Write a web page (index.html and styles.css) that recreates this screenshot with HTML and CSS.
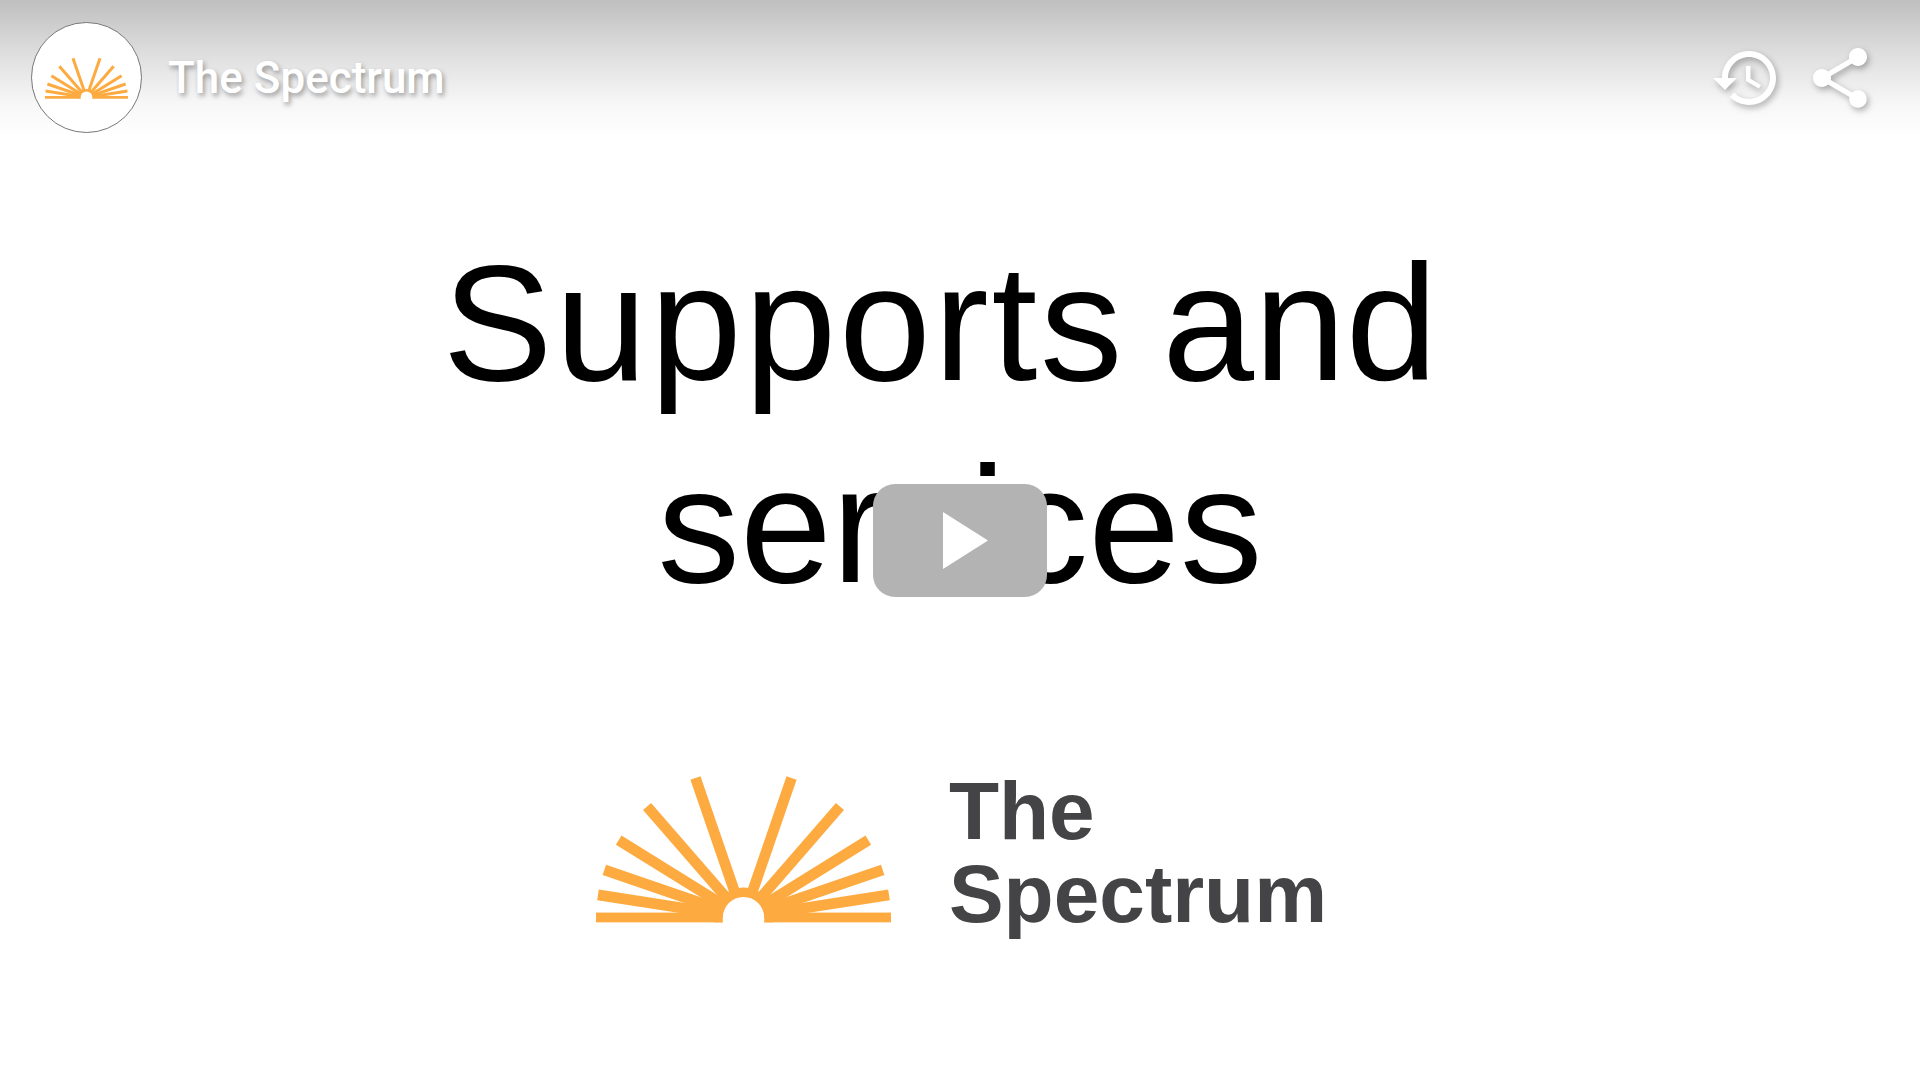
FILE: index.html
```html
<!DOCTYPE html>
<html lang="en">
<head>
  <meta charset="UTF-8">
  <meta name="viewport" content="width=device-width, initial-scale=1.0">
  <title>Supports and services - The Spectrum</title>
  <link rel="stylesheet" href="styles.css">
</head>
<body>
<div class="player">
  <div class="slide">
    <h1 class="slide-title">
      <span class="title-line"><span class="title-word">Supports</span> and</span><br>services
    </h1>
    <div class="brand">
      <svg class="brand-mark" viewBox="50 40 884 446" aria-hidden="true">
        <g id="mark">
          <g stroke="#fdab41" stroke-width="32" fill="none">
            <path d="M348 52L492 470M636 52L492 470"/>
            <path d="M203 137L492 470M781 137L492 470"/>
            <path d="M118 238L492 470M866 238L492 470"/>
            <path d="M75 327L492 470M909 327L492 470"/>
            <path d="M56 402L492 470M928 402L492 470"/>
          </g>
          <circle cx="492" cy="470" r="90" fill="#fdab41"/>
          <rect x="50" y="455" width="884" height="30" fill="#fdab41"/>
          <path d="M430 490V470A62 62 0 0 1 554 470V490Z" fill="#fff"/>
          <rect x="50" y="485" width="884" height="40" fill="#fff"/>
        </g>
      </svg>
      <div class="brand-name">The<br>Spectrum</div>
    </div>
  </div>

  <div class="topbar">
    <div class="channel-icon">
      <svg class="channel-mark" viewBox="50 40 884 446" aria-hidden="true">
        <use href="#mark"/>
      </svg>
    </div>
    <div class="channel-name">The Spectrum</div>
    <div class="topbar-actions">
      <svg class="action-icon" viewBox="0 0 24 24" aria-hidden="true">
        <path d="M13 3c-4.97 0-9 4.03-9 9H1l3.89 3.89.07.14L9 12H6c0-3.87 3.13-7 7-7s7 3.13 7 7-3.13 7-7 7c-1.93 0-3.68-.79-4.94-2.06l-1.42 1.42C8.27 19.99 10.51 21 13 21c4.97 0 9-4.03 9-9s-4.03-9-9-9zm-1 5v5l4.28 2.54.72-1.21-3.5-2.08V8H12z"/>
      </svg>
      <svg class="action-icon" viewBox="0 0 24 24" aria-hidden="true">
        <path d="M18 16.08c-.76 0-1.44.3-1.96.77L8.91 12.7c.05-.23.09-.46.09-.7s-.04-.47-.09-.7l7.05-4.11c.54.5 1.25.81 2.04.81 1.66 0 3-1.34 3-3s-1.34-3-3-3-3 1.34-3 3c0 .24.04.47.09.7L8.04 9.81C7.5 9.31 6.79 9 6 9c-1.66 0-3 1.34-3 3s1.34 3 3 3c.79 0 1.5-.31 2.04-.81l7.12 4.16c-.05.21-.08.43-.08.65 0 1.61 1.31 2.92 2.92 2.92 1.61 0 2.92-1.31 2.92-2.92s-1.31-2.92-2.92-2.92z"/>
      </svg>
    </div>
  </div>

  <div class="play-button">
    <svg class="play-icon" viewBox="0 0 45 57" aria-hidden="true">
      <path d="M0 0L45 28.5L0 57Z"/>
    </svg>
  </div>
</div>
</body>
</html>
```

FILE: styles.css
```css
body {
  margin: 0;
  padding: 0;
  background-color: #fff;
  font-family: 'Liberation Sans', Arial, sans-serif;
}

.player {
  position: relative;
  width: 1920px;
  height: 1080px;
  overflow: hidden;
  background-color: #fff;
}

.slide {
  display: flex;
  flex-direction: column;
  align-items: center;
  padding-top: 222px;
}

.slide-title {
  margin: 0;
  font-size: 165px;
  font-weight: 400;
  line-height: 202px;
  text-align: center;
  color: #000;
}

/* first line sits a little left of centre in the slide */
.title-line {
  display: inline-block;
  padding-right: 40px;
  word-spacing: -9px;
}

.title-word {
  letter-spacing: 2.8px;
}

.brand {
  display: flex;
  align-items: flex-start;
  gap: 58px;
  margin-top: 143px;
  margin-left: 3px;
}

.brand-mark {
  display: block;
  width: 295px;
  height: 149px;
  margin-top: 5px;
}

.brand-name {
  font-size: 82px;
  font-weight: 700;
  line-height: 83px;
  color: #444446;
}

/* title bar lies over the slide */
.topbar {
  position: absolute;
  top: 0;
  left: 0;
  right: 0;
  height: 135px;
  display: flex;
  align-items: center;
  padding: 23px 44px 3px 31px;
  box-sizing: border-box;
  background: linear-gradient(to bottom, #bfbfbf, #dcdcdc 37%, #f6f6f6 75%, #fff);
}

.channel-icon {
  display: flex;
  align-items: center;
  justify-content: center;
  width: 111px;
  height: 111px;
  box-sizing: border-box;
  border: 1px solid #777;
  border-radius: 50%;
  background-color: #fff;
}

.channel-mark {
  display: block;
  width: 83px;
  height: 42px;
}

.channel-name {
  margin-left: 26px;
  font-family: Roboto, sans-serif;
  font-size: 44px;
  font-weight: 500;
  color: #fff;
  text-shadow: 2px 3px 5px rgba(0, 0, 0, 0.35);
}

.topbar-actions {
  display: flex;
  gap: 22px;
  margin-left: auto;
}

.action-icon {
  display: block;
  width: 72px;
  height: 72px;
  fill: #fff;
  filter: drop-shadow(2px 3px 3px rgba(0, 0, 0, 0.3));
}

.play-button {
  position: absolute;
  top: 484px;
  left: 873px;
  width: 174px;
  height: 113px;
  display: flex;
  align-items: center;
  justify-content: center;
  border-radius: 22px;
  background-color: #b3b3b3;
}

.play-icon {
  display: block;
  width: 45px;
  height: 57px;
  margin-left: 11px;
  fill: #fff;
}
```
